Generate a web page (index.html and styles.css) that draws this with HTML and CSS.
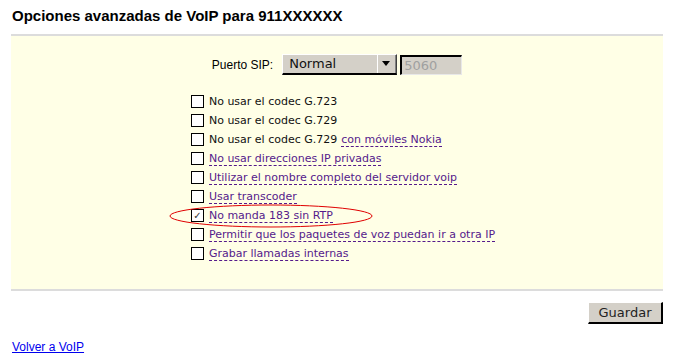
FILE: index.html
```html
<!DOCTYPE html>
<html lang="es">
<head>
	<meta charset="UTF-8">
	<title>Opciones avanzadas de VoIP</title>
	<link rel="stylesheet" href="styles.css">
</head>
<body>
<h1 class="title">Opciones avanzadas de VoIP para 911XXXXXX</h1>
<div class="panel">
	<div class="sip-row">
		<span class="sip-label">Puerto SIP:</span>
		<div class="select">
			<span class="select-value">Normal</span>
			<span class="select-arrow"></span>
		</div>
		<span class="port">5060</span>
	</div>
	<div class="options">
		<div class="opt"><span class="box"></span><span>No usar el codec G.723</span></div>
		<div class="opt"><span class="box"></span><span>No usar el codec G.729</span></div>
		<div class="opt"><span class="box"></span><span>No usar el codec G.729</span><a class="tip gap">con móviles Nokia</a></div>
		<div class="opt"><span class="box"></span><a class="tip">No usar direcciones IP privadas</a></div>
		<div class="opt"><span class="box"></span><a class="tip">Utilizar el nombre completo del servidor voip</a></div>
		<div class="opt"><span class="box"></span><a class="tip">Usar transcoder</a></div>
		<div class="opt"><span class="box checked">&#10003;</span><a class="tip">No manda 183 sin RTP</a>
			<svg class="ring" width="206" height="26" viewBox="0 0 206 26"><ellipse cx="103" cy="13" rx="101" ry="11" fill="none" stroke="#e00000" stroke-width="1"/></svg>
		</div>
		<div class="opt"><span class="box"></span><a class="tip">Permitir que los paquetes de voz puedan ir a otra IP</a></div>
		<div class="opt"><span class="box"></span><a class="tip">Grabar llamadas internas</a></div>
	</div>
</div>
<div class="actions">
	<button class="save">Guardar</button>
</div>
<a class="back" href="#">Volver a VoIP</a>
</body>
</html>
```
FILE: styles.css
```css
* {
	margin: 0;
	padding: 0;
}
body {
	padding: 0 23px 0 11px;
	font-family: "Liberation Sans", Arial, sans-serif;
	color: #000;
	background: #fff;
}
.title {
	font-size: 15px;
	font-weight: bold;
	padding: 7px 0 0 1px;
	height: 27px;
	line-height: 18px;
}
.panel {
	background: #ffffe6;
	border-top: 2px solid #dcdcdc;
	border-bottom: 2px solid #dcdcdc;
	padding: 18px 0 26px;
}
.sip-row {
	display: flex;
	justify-content: center;
	align-items: center;
	font-size: 12px;
	height: 21px;
}
.sip-label {
	margin-right: 9px;
}
.select {
	display: flex;
	width: 115px;
	height: 21px;
	box-sizing: border-box;
	background: #d4d0c8;
	border-top: 1px solid #fff;
	border-left: 1px solid #fff;
	border-bottom: 2px solid #000;
	border-right: 1px solid #404040;
	font-family: "DejaVu Sans", sans-serif;
	font-size: 13px;
	color: #111;
}
.select-value {
	flex: 1;
	padding-left: 6px;
	line-height: 18px;
}
.select-arrow {
	width: 17px;
	border-left: 1px solid #fff;
	border-right: 1px solid #808080;
	position: relative;
}
.select-arrow::after {
	content: "";
	position: absolute;
	left: 4px;
	top: 6px;
	border-left: 4px solid transparent;
	border-right: 4px solid transparent;
	border-top: 5px solid #000;
}
.port {
	margin-left: 3px;
	width: 62px;
	height: 20px;
	box-sizing: border-box;
	background: #d4d0c8;
	border-top: 2px solid #000;
	border-left: 2px solid #000;
	border-right: 1px solid #e8e8e8;
	border-bottom: 1px solid #e8e8e8;
	color: #a0a0a0;
	font-family: "DejaVu Sans", sans-serif;
	font-size: 13px;
	line-height: 17px;
	padding-left: 2px;
}
.options {
	width: max-content;
	margin: 17px auto 0;
	padding-left: 12px;
	font-family: "DejaVu Sans", sans-serif;
	font-size: 11px;
	color: #111;
}
.opt {
	display: flex;
	align-items: center;
	height: 19px;
	position: relative;
}
.box {
	width: 11px;
	height: 11px;
	border: 1px solid #000;
	background: #fff;
	margin-right: 5px;
	font-size: 10px;
	line-height: 11px;
	text-align: center;
	color: #333;
}
.tip {
	color: #551a8b;
	border-bottom: 1px dashed #551a8b;
	line-height: 13px;
}
.gap {
	margin-left: 4px;
}
.ring {
	position: absolute;
	left: -23px;
	top: -3px;
}
.actions {
	display: flex;
	justify-content: flex-end;
	padding-top: 11px;
}
.save {
	width: 75px;
	height: 22px;
	background: #d4d0c8;
	border-top: 1px solid #fff;
	border-left: 1px solid #fff;
	border-right: 2px solid #000;
	border-bottom: 2px solid #000;
	font-family: "DejaVu Sans", sans-serif;
	font-size: 13px;
	color: #222;
}
.back {
	display: inline-block;
	margin: 16px 0 0 1px;
	font-size: 12px;
	color: #0000ee;
}
```
